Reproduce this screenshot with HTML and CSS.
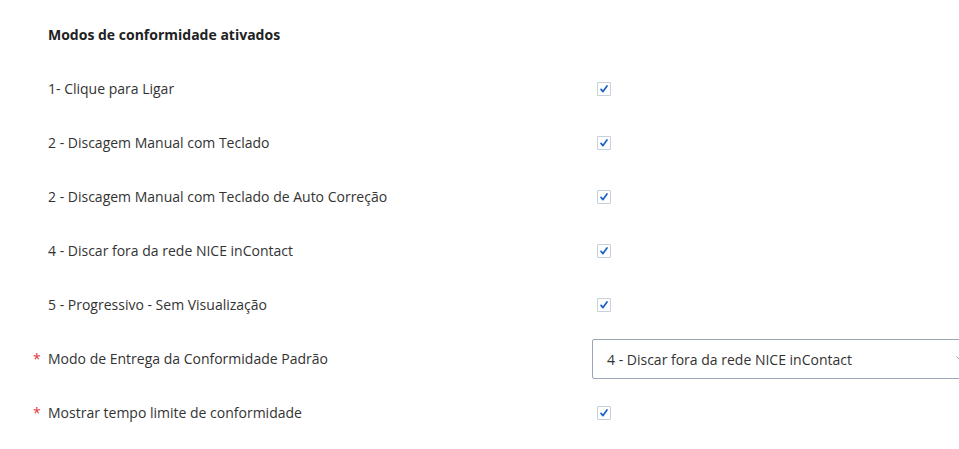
FILE: index.html
```html
<!DOCTYPE html>
<html lang="pt">
<head>
<meta charset="utf-8">
<link rel="stylesheet" href="styles.css">
</head>
<body>
<div class="viewport">
<div class="form">
  <div class="row header"><div class="label">Modos de conformidade ativados</div></div>
  <div class="row"><div class="label">1- Clique para Ligar</div><div class="control"><span class="cb"><svg viewBox="0 0 14 14"><path d="M3.5 7.5 L5.8 10 L10.5 3.5"/></svg></span></div></div>
  <div class="row"><div class="label">2 - Discagem Manual com Teclado</div><div class="control"><span class="cb"><svg viewBox="0 0 14 14"><path d="M3.5 7.5 L5.8 10 L10.5 3.5"/></svg></span></div></div>
  <div class="row"><div class="label">2 - Discagem Manual com Teclado de Auto Correção</div><div class="control"><span class="cb"><svg viewBox="0 0 14 14"><path d="M3.5 7.5 L5.8 10 L10.5 3.5"/></svg></span></div></div>
  <div class="row"><div class="label">4 - Discar fora da rede NICE inContact</div><div class="control"><span class="cb"><svg viewBox="0 0 14 14"><path d="M3.5 7.5 L5.8 10 L10.5 3.5"/></svg></span></div></div>
  <div class="row"><div class="label">5 - Progressivo - Sem Visualização</div><div class="control"><span class="cb"><svg viewBox="0 0 14 14"><path d="M3.5 7.5 L5.8 10 L10.5 3.5"/></svg></span></div></div>
  <div class="row"><div class="label req">Modo de Entrega da Conformidade Padrão</div><div class="control"><div class="select"><span>4 - Discar fora da rede NICE inContact</span><svg class="chev" viewBox="0 0 10 6"><path d="M0.5 0.5 L5 5 L9.5 0.5"/></svg></div></div></div>
  <div class="row"><div class="label req">Mostrar tempo limite de conformidade</div><div class="control"><span class="cb"><svg viewBox="0 0 14 14"><path d="M3.5 7.5 L5.8 10 L10.5 3.5"/></svg></span></div></div>
</div>
</div>
</body>
</html>
```
FILE: styles.css
```css
html, body {
  margin: 0;
  padding: 0;
  background: #fff;
}
body {
  font-family: "Open Sans", "Noto Sans", sans-serif;
  font-size: 14px;
  color: #333;
}
.viewport {
  width: 959px;
  height: 449px;
  overflow: hidden;
}
.form {
  padding: 7px 0 0 48px;
  width: 1000px;
}
.row {
  display: flex;
  align-items: center;
  height: 54px;
}
.label {
  width: 544px;
  flex: none;
  position: relative;
}
.header .label {
  font-weight: 700;
  color: #222;
}
.req::before {
  content: "*";
  position: absolute;
  left: -15px;
  top: 0;
  color: #e5343a;
}
.control {
  display: flex;
  align-items: center;
  padding-top: 2px;
}
.cb {
  display: inline-flex;
  width: 12px;
  height: 12px;
  margin-left: 5px;
  border: 1px solid #c6d0da;
  border-radius: 1px;
  background: #fff;
}
.cb svg {
  width: 12px;
  height: 12px;
}
.cb path {
  fill: none;
  stroke: #1a62c4;
  stroke-width: 2;
  stroke-linecap: round;
  stroke-linejoin: round;
}
.select {
  box-sizing: border-box;
  width: 386px;
  height: 40px;
  border: 1px solid #9aa7b6;
  border-radius: 2px;
  display: flex;
  align-items: center;
  justify-content: space-between;
  padding: 0 11px 0 14px;
  color: #333;
}
.chev {
  width: 10px;
  height: 6px;
}
.chev path {
  fill: none;
  stroke: #a4adb6;
  stroke-width: 1;
}
```
